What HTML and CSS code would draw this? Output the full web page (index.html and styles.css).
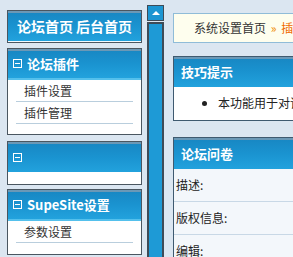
FILE: index.html
```html
<!DOCTYPE html>
<html lang="zh">
<head>
<meta charset="utf-8">
<link rel="stylesheet" href="styles.css">
</head>
<body>
<div class="side">
  <div class="box box-top">
    <div class="head head-top">论坛首页&nbsp;后台首页</div>
    <div class="white-line"></div>
  </div>
  <div class="box box-plugins">
    <div class="head"><span class="minus"></span>论坛插件</div>
    <div class="stripe"></div>
    <ul class="items">
      <li>插件设置</li>
      <li>插件管理</li>
    </ul>
  </div>
  <div class="box box-empty">
    <div class="head"><span class="minus"></span></div>
    <div class="empty-body"></div>
  </div>
  <div class="box box-supe">
    <div class="head"><span class="minus"></span>SupeSite设置</div>
    <div class="stripe"></div>
    <ul class="items">
      <li>参数设置</li>
    </ul>
  </div>
</div>
<div class="scroll">
  <div class="scroll-btn"><span class="arrow"></span></div>
  <div class="scroll-track"></div>
</div>
<div class="main">
  <div class="crumb">系统设置首页 <span class="sep">»</span> <span class="cur">插件管理</span></div>
  <div class="panel tips">
    <div class="panel-head">技巧提示</div>
    <ul class="tip-list">
      <li>本功能用于对论坛插件进行管理</li>
    </ul>
  </div>
  <div class="panel survey">
    <div class="panel-head survey-head">论坛问卷</div>
    <div class="row">描述:</div>
    <div class="row">版权信息:</div>
    <div class="row">编辑:</div>
  </div>
</div>
</body>
</html>
```
FILE: styles.css
```css
html, body {
  margin: 0;
  padding: 0;
}
body {
  width: 293px;
  height: 257px;
  overflow: hidden;
  display: flex;
  align-items: flex-start;
  background: #dbe6f1;
  font-family: "Noto Sans CJK SC", "DejaVu Sans", sans-serif;
  font-size: 12px;
  color: #333;
}
.side {
  flex: none;
  width: 135px;
  padding: 10px 0 0 7px;
  display: flex;
  flex-direction: column;
}
.box {
  border: 1px solid #4a5660;
  background: #fff;
}
.box-plugins { margin-top: 5px; }
.box-empty { margin-top: 6px; }
.box-supe { margin-top: 4px; }
.head {
  height: 29px;
  display: flex;
  align-items: center;
  padding-left: 5px;
  color: #fff;
  font-weight: bold;
  font-size: 13px;
  background: linear-gradient(#6b98b6 0, #6b98b6 2px, #1888c4 2px, #1a93d0 50%, #22a2dd 100%);
}
.head-top {
  height: 30px;
  justify-content: center;
  padding-left: 0;
  font-size: 14px;
}
.white-line {
  height: 1px;
  background: #f4fbff;
}
.stripe {
  height: 2px;
  background: #54c0ec;
}
.minus {
  width: 7px;
  height: 7px;
  border: 1px solid #fff;
  margin-right: 5px;
  position: relative;
  flex: none;
}
.minus::after {
  content: "";
  position: absolute;
  left: 1px;
  right: 1px;
  top: 3px;
  height: 1px;
  background: #fff;
}
.box-empty .head { height: 30px; }
.empty-body { height: 12px; }
.items {
  list-style: none;
  margin: 0;
  padding: 0 8px 10px 8px;
}
.items li {
  height: 21px;
  line-height: 21px;
  padding-left: 8px;
  border-bottom: 1px solid #b9cedd;
  font-size: 12px;
  color: #333;
}
.box-supe .items { padding-bottom: 11px; }
.scroll {
  flex: none;
  margin-left: 5px;
  margin-top: 5px;
  width: 17px;
  height: 252px;
  display: flex;
  flex-direction: column;
}
.scroll-btn {
  height: 14px;
  border: 1px solid #3e4b57;
  background: #1c95d2;
  display: flex;
  justify-content: center;
  align-items: center;
}
.arrow {
  width: 0;
  height: 0;
  border-left: 4px solid transparent;
  border-right: 4px solid transparent;
  border-bottom: 4px solid #fff;
}
.scroll-track {
  flex: 1;
  margin-top: 1px;
  border: 2px solid #3e4b57;
  border-bottom: none;
  background: #1e9ad6;
}
.main {
  flex: 1;
  min-width: 0;
  margin-left: 9px;
  padding-top: 13px;
  display: flex;
  flex-direction: column;
}
.crumb {
  width: 300px;
  height: 28px;
  line-height: 28px;
  border: 1px solid #8fbcd8;
  background: #fefeee;
  padding-left: 20px;
  white-space: nowrap;
  color: #333;
}
.sep { color: #f08a00; margin: 0 2px; }
.cur { color: #f06a00; }
.panel {
  width: 300px;
  border: 1px solid #3f5a70;
  background: #fff;
}
.tips { margin-top: 13px; }
.panel-head {
  height: 30px;
  line-height: 30px;
  padding-left: 7px;
  color: #fff;
  font-weight: bold;
  font-size: 13px;
  background: linear-gradient(#6b98b6 0, #6b98b6 2px, #1888c4 2px, #1a93d0 50%, #22a2dd 100%);
}
.tip-list {
  margin: 0;
  padding: 8px 0 9px 44px;
  list-style: disc;
  white-space: nowrap;
}
.tip-list li {
  line-height: 16px;
  color: #222;
}
.survey { margin-top: 16px; background: #f3f7fb; }
.survey-head { height: 31px; line-height: 31px; }
.row {
  height: 32px;
  line-height: 32px;
  padding-left: 2px;
  border-bottom: 1px solid #c8d8e6;
  color: #222;
}
```
